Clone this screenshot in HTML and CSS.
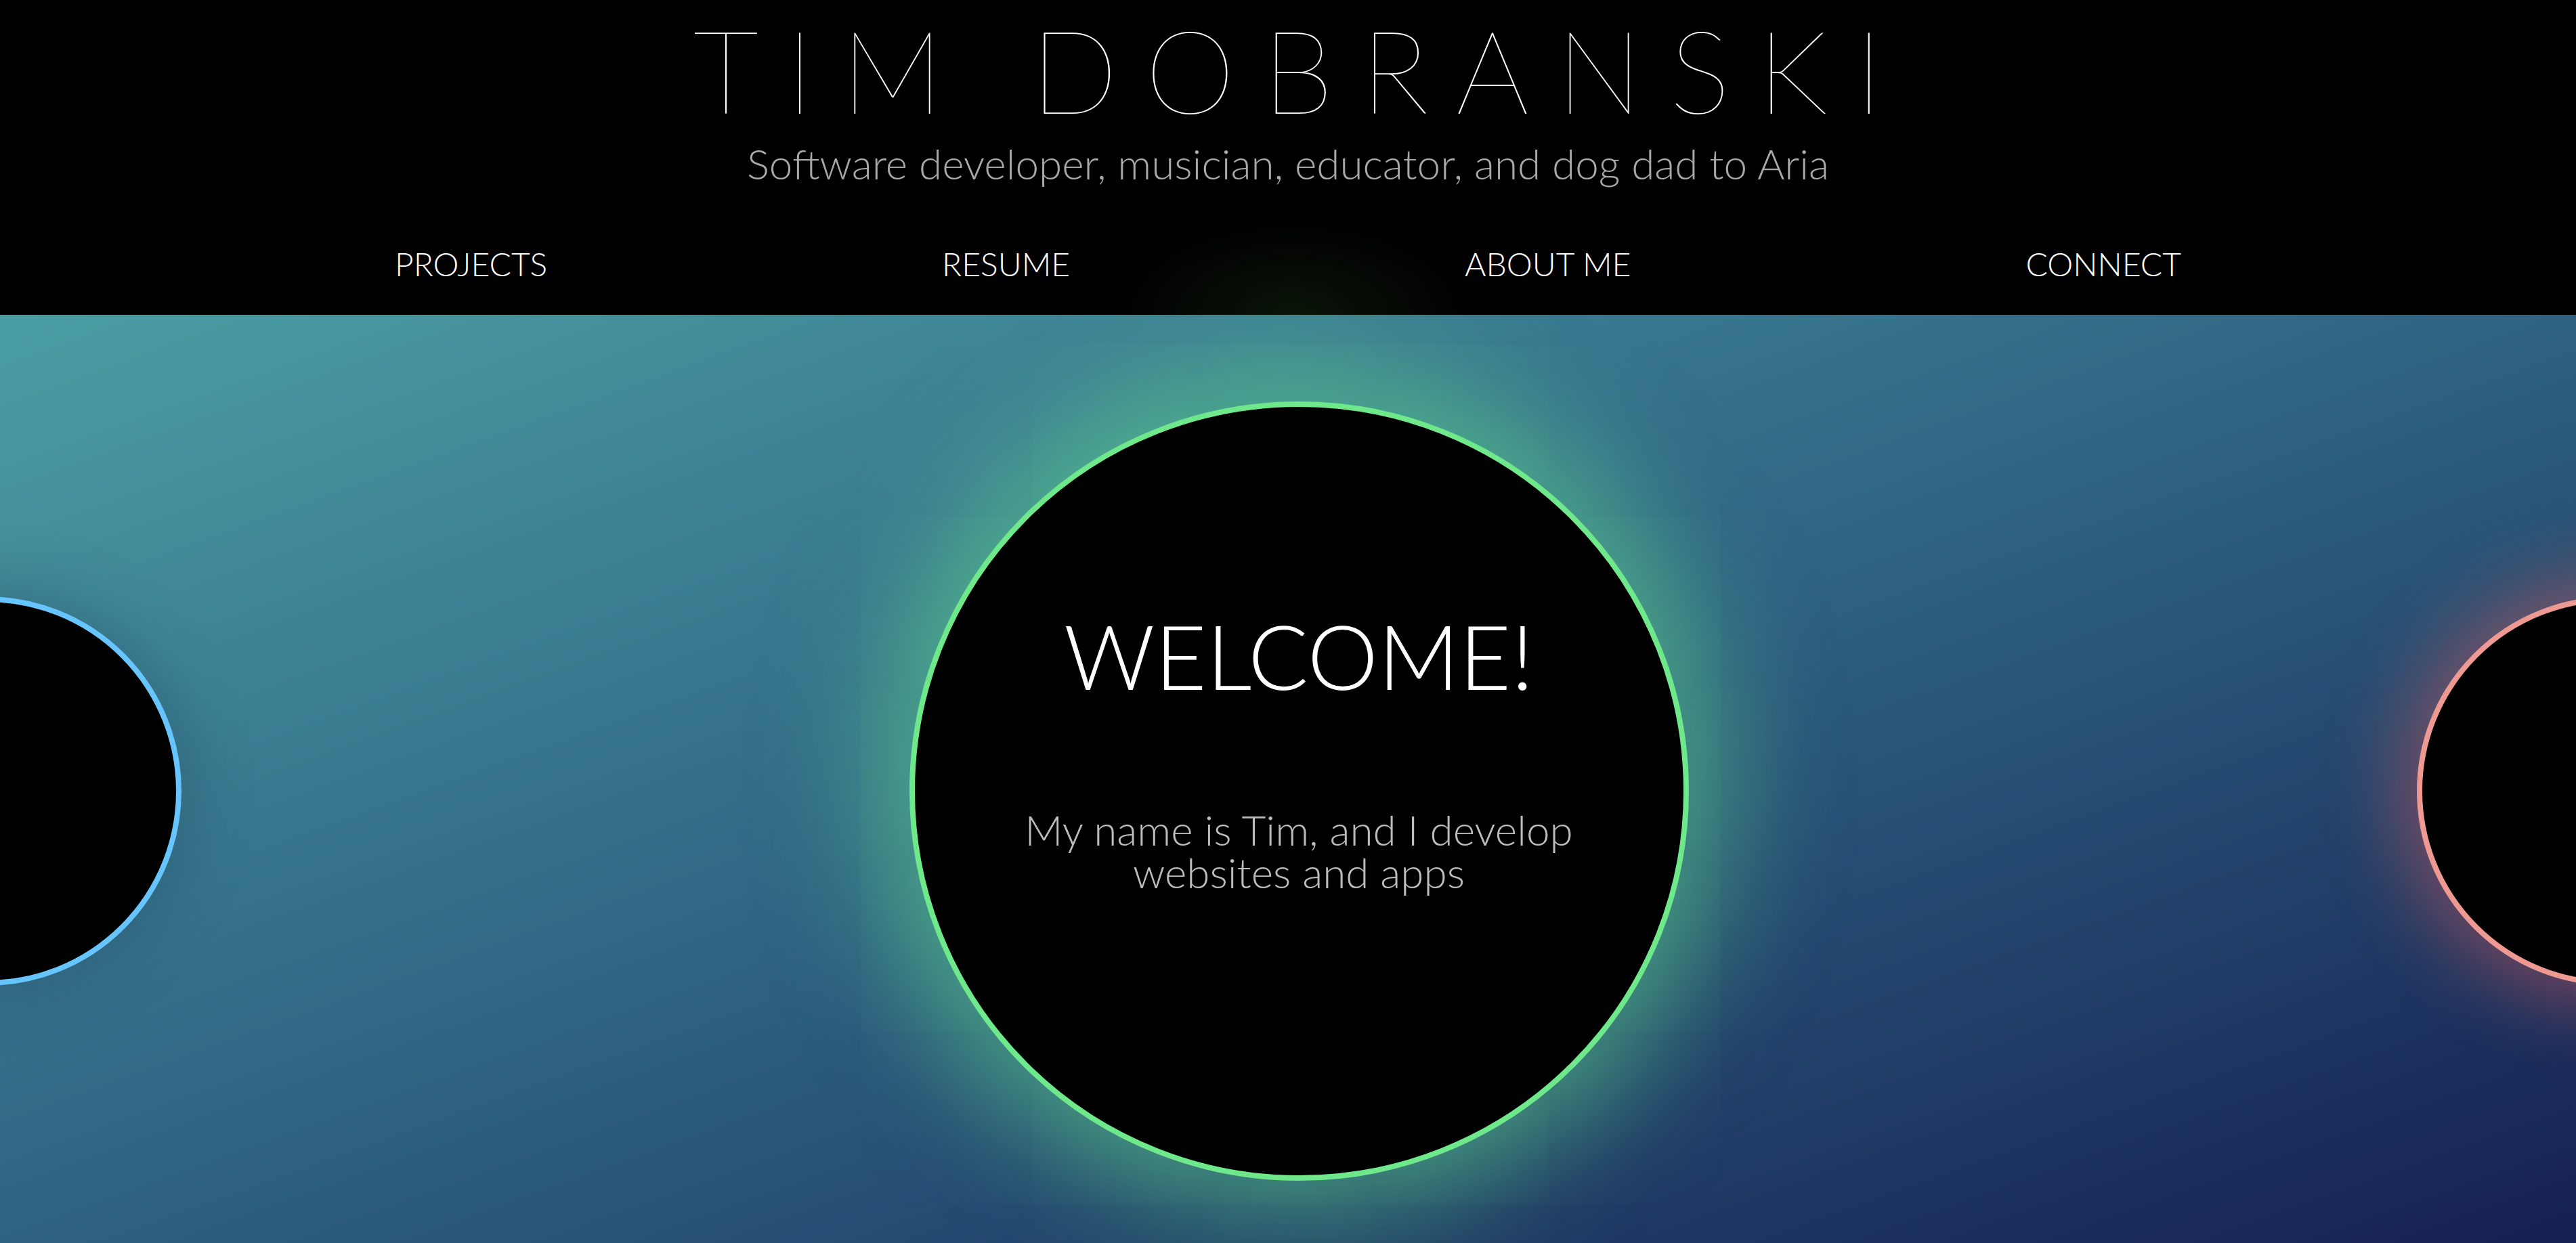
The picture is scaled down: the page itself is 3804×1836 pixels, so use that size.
FILE: index.html
```html
<!DOCTYPE html>
<html lang="en">
<head>
<meta charset="utf-8">
<title>Tim Dobranski</title>
<link rel="stylesheet" href="styles.css">
</head>
<body>
<header class="site-header">
  <h1 class="site-title">TIM DOBRANSKI</h1>
  <p class="site-tagline">Software developer, musician, educator, and dog dad to Aria</p>
  <nav class="site-nav">
    <a class="nav-link" href="#projects">PROJECTS</a>
    <a class="nav-link" href="#resume">RESUME</a>
    <a class="nav-link" href="#about">ABOUT ME</a>
    <a class="nav-link" href="#connect">CONNECT</a>
  </nav>
</header>
<main class="hero">
  <div class="carousel">
    <div class="orb orb-side orb-blue"></div>
    <div class="orb orb-main">
      <h2 class="orb-title">WELCOME!</h2>
      <p class="orb-text">My name is Tim, and I develop websites and apps</p>
    </div>
    <div class="orb orb-side orb-pink"></div>
  </div>
</main>
</body>
</html>
```
FILE: styles.css
```css
html, body {
  margin: 0;
  padding: 0;
  background: #000;
  overflow: hidden;
  height: 1836px;
}
body {
  font-family: "Lato", "Noto Sans", sans-serif;
  font-weight: 300;
  color: #fff;
}
.site-header {
  height: 465px;
  box-sizing: border-box;
  background: radial-gradient(ellipse 260px 140px at 1910px 100%, rgba(30, 60, 25, 0.35), rgba(0, 0, 0, 0) 100%), #000;
  text-align: center;
  padding-top: 0;
  position: relative;
  z-index: 2;
}
.site-title {
  margin: 0;
  font-weight: 100;
  font-size: 170px;
  line-height: 1.2;
  letter-spacing: 40px;
  padding-left: 40px;
  color: #fff;
}
.site-tagline {
  margin: 0;
  font-size: 62px;
  font-weight: 300;
  line-height: 1.2;
  color: #a9a9a9;
}
.site-nav {
  display: flex;
  justify-content: space-evenly;
  margin-top: 88px;
}
.nav-link {
  color: #fff;
  text-decoration: none;
  font-size: 48px;
  font-weight: 300;
  line-height: 1;
}
.hero {
  height: 1371px;
  padding-top: 128px;
  box-sizing: border-box;
  background: linear-gradient(to bottom right, #4b9ea4 0%, #2e6282 50%, #151f50 100%);
  overflow: hidden;
  position: relative;
}
.carousel {
  display: flex;
  align-items: center;
  justify-content: center;
  gap: 1075px;
  height: 1151px;
  padding-left: 32px;
}
.orb {
  flex: 0 0 auto;
  border-radius: 50%;
  background: #000;
  box-sizing: border-box;
}
.orb-side {
  width: 575px;
  height: 575px;
  border: 8px solid;
}
.orb-blue {
  border-color: #66c5fe;
  box-shadow: 0 0 90px 10px rgba(30, 60, 90, 0.35);
}
.orb-pink {
  border-color: #ee9a93;
  box-shadow: 0 0 110px 30px rgba(220, 90, 90, 0.45);
}
.orb-main {
  width: 1151px;
  height: 1151px;
  border: 8px solid #6ee88b;
  box-shadow: 0 0 170px 50px rgba(100, 225, 140, 0.55);
  display: flex;
  flex-direction: column;
  align-items: center;
  text-align: center;
}
.orb-title {
  margin: 288px 0 0;
  font-size: 132px;
  font-weight: 300;
  line-height: 1.2;
  color: #fff;
}
.orb-text {
  margin: 147px 0 0;
  width: 880px;
  font-size: 62px;
  font-weight: 300;
  line-height: 63px;
  color: #bdbdbd;
}
```
